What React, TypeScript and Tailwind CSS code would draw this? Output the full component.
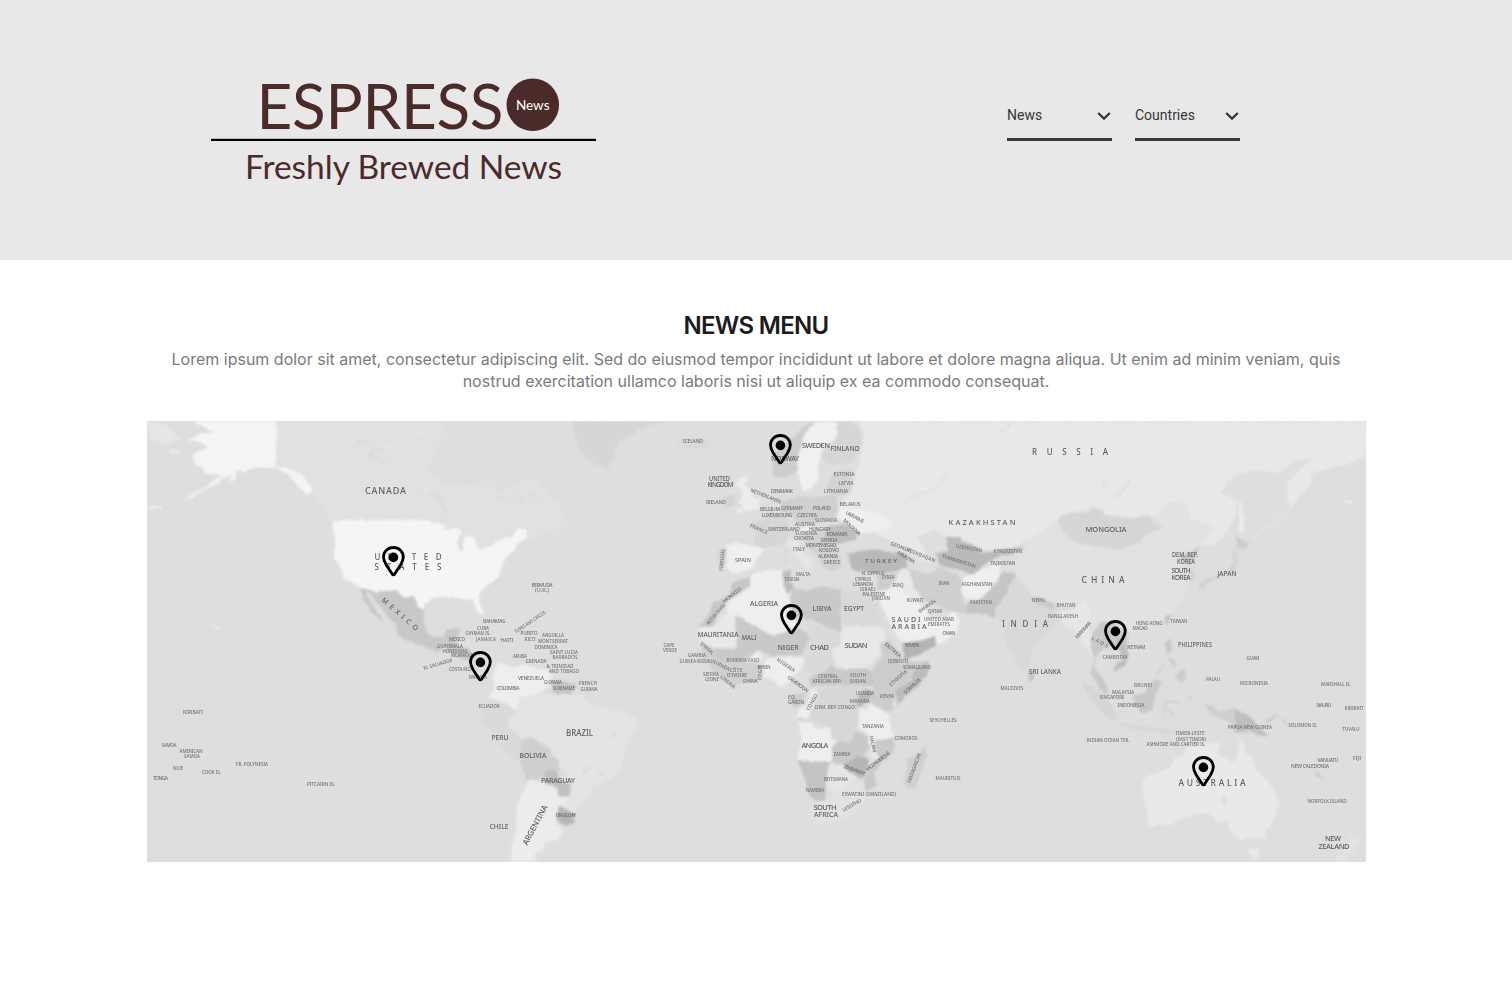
import React from "react";

type Shape = [fill: string, d: string];
type Label = [text: string, x: number, y: number, width: number, size: number, angle?: number];
type Pin = [name: string, x: number, y: number];

const land: Shape[] = [
  ["#e1e1e1", "276,421 440,421 450,440 432,455 430,472 442,482 470,486 480,478 500,492 520,480 535,478 548,492 562,510 570,525 545,533 527,540 518,528 502,538 478,551 470,540 447,526 427,520 332,521 322,505 310,490 294,470 276,467"],
  ["#dddddd", "440,440 480,430 492,450 480,478 470,484 445,480 434,465"],
  ["#e6e6e6", "147,422 165,424 180,438 168,445 150,440"],
  ["#f4f4f4", "189,421 276,421 276,467 286,468 301,474 312,487 312,493 305,493 296,484 288,474 276,468 254,467 244,472 236,470 236,478 229,483 232,475 222,478 218,474 206,474 202,468 194,463 192,456 197,452 209,447 196,441 187,440 197,435 212,432 201,425"],
  ["#f1f1f1", "228,474 218,484 204,490 190,498 180,502 193,494 206,487 216,478"],
  ["#f5f5f5", "332,521 338,523 340,520 427,520 447,526 440,531 458,528 462,532 457,541 460,552 463,548 464,537 474,536 476,545 480,550 492,546 502,538 512,537 518,528 525,528 528,537 517,544 515,550 506,556 502,565 500,573 497,579 486,586 479,594 479,602 484,613 478,614 473,600 457,598 447,597 434,598 424,604 424,610 418,607 414,597 405,598 394,590 377,592 359,587 344,578 341,568 334,557 335,540"],
  ["#c8c8c8", "359,587 377,592 394,590 405,598 414,597 418,607 424,610 424,626 430,636 443,638 447,629 460,628 458,637 448,645 439,652 427,648 408,641 397,634 396,624 387,616 378,604 368,591 366,594 373,606 384,621 381,621 371,611 364,601"],
  ["#c5c5c5", "442,646 450,640 458,640 456,645 470,650 474,661 466,660 455,656"],
  ["#d6d6d6", "573,421 667,421 655,424 647,427 634,432 627,438 619,441 614,456 607,469 596,464 586,458 578,447"],
  ["#d9d9d9", "676,440 684,437 690,441 700,437 708,439 706,446 694,449 682,447"],
  ["#ececec", "738,479 744,475 748,477 744,485 751,489 753,497 760,500 758,509 746,511 734,514 743,506 737,502 743,498 741,489 736,486"],
  ["#d2d2d2", "723,498 731,494 736,497 734,505 725,508"],
  ["#cdcdcd", "773,475 773,455 785,444 797,434 806,425 818,421 806,432 801,445 798,457 797,471 785,478"],
  ["#f0f0f0", "810,427 817,422 837,422 837,437 823,449 818,463 818,480 810,489 803,491 798,473 799,455 803,437"],
  ["#d6d6d6", "837,422 850,421 860,430 862,448 850,463 828,465 821,455 837,438"],
  ["#d3d3d3", "833,472 853,470 851,492 840,497 826,490"],
  ["#e8e8e8", "858,421 1366,421 1366,456 1350,463 1333,468 1322,470 1313,473 1310,485 1300,497 1290,509 1286,498 1287,484 1302,467 1313,457 1303,460 1293,462 1280,473 1262,471 1240,473 1228,482 1220,493 1237,500 1236,517 1223,538 1213,545 1202,545 1212,527 1192,520 1185,503 1167,502 1157,517 1140,517 1103,515 1093,508 1070,513 1057,520 1030,541 990,553 980,547 960,537 948,537 933,530 917,537 930,560 938,563 920,560 900,545 882,537 868,530 845,523 837,508 851,492 857,470 862,450 864,434"],
  ["#efefef", "838,508 858,510 874,512 893,521 890,530 876,531 868,533 858,533 845,523 838,518"],
  ["#d0d0d0", "783,501 800,496 815,498 835,494 838,508 835,517 820,522 801,523 788,515 780,511"],
  ["#d6d6d6", "748,524 764,520 771,511 787,517 790,530 786,543 765,548 753,544 757,532"],
  ["#efefef", "726,545 736,543 750,545 766,549 757,559 752,569 734,574 726,567"],
  ["#d0d0d0", "719,549 727,548 725,568 719,568"],
  ["#e6e6e6", "785,542 800,540 798,548 810,558 814,564 808,570 801,562 792,550"],
  ["#eeeeee", "795,528 810,526 812,531 799,533"],
  ["#d2d2d2", "802,533 822,530 838,545 842,567 827,572 816,555 806,545"],
  ["#bebebe", "827,527 846,524 858,533 855,540 842,543 823,541"],
  ["#b9b9b9", "847,554 860,551 877,549 890,553 906,554 907,568 890,572 873,573 852,570"],
  ["#cdcdcd", "877,575 896,572 897,580 884,592 878,590"],
  ["#e9e9e9", "897,573 905,568 912,576 922,594 917,600 893,588"],
  ["#efefef", "877,593 893,587 915,600 923,606 930,617 945,620 955,608 960,622 956,633 940,644 920,640 903,643 896,634 886,615"],
  ["#b4b4b4", "902,643 920,641 935,636 936,645 921,654 905,659"],
  ["#cfcfcf", "909,567 916,572 930,574 940,567 955,573 963,580 963,599 968,613 947,611 936,604 926,602 914,588"],
  ["#bababa", "947,537 960,537 963,542 973,545 983,553 1010,548 1024,547 1014,554 997,557 989,561 983,566 974,576 961,570 940,566 936,553 948,552"],
  ["#efefef", "963,578 980,570 1000,563 999,575 991,588 981,598 965,599 961,590"],
  ["#c5c5c5", "1002,572 1017,574 1014,580 1009,585 1007,595 996,607 995,618 981,613 967,614 966,604 981,599 992,588 1000,578"],
  ["#e2e2e2", "1030,541 1057,520 1063,526 1070,537 1100,547 1120,548 1140,540 1163,528 1157,517 1167,502 1185,503 1192,520 1212,527 1202,545 1180,555 1172,554 1183,572 1187,588 1183,601 1165,620 1135,632 1110,629 1085,622 1075,605 1050,603 1030,593 1017,577 1012,565 1022,551"],
  ["#d5d5d5", "1057,520 1063,515 1078,512 1090,513 1093,508 1103,510 1104,515 1130,519 1150,515 1152,523 1163,528 1145,534 1140,542 1120,549 1100,547 1077,543 1065,534"],
  ["#d9d9d9", "1013,577 1020,578 1033,597 1053,607 1075,608 1070,616 1057,622 1045,636 1032,647 1029,668 1022,674 1013,659 1006,642 1003,624 995,618 1000,603 1010,590"],
  ["#c9c9c9", "1030,598 1038,597 1055,604 1053,609 1040,606"],
  ["#e7e7e7", "1057,612 1075,609 1084,600 1090,612 1087,625 1096,640 1092,655 1084,646 1080,634 1065,625"],
  ["#c9c9c9", "1090,637 1100,623 1112,622 1127,633 1128,644 1120,649 1104,648 1097,655 1093,667 1106,682 1109,696 1100,690 1091,672 1095,658 1091,648"],
  ["#bfbfbf", "1115,636 1125,643 1129,655 1125,666 1113,672 1114,667 1123,659 1118,648"],
  ["#c4c4c4", "1028,670 1034,672 1034,680 1029,682"],
  ["#d5d5d5", "1081,682 1090,686 1102,696 1116,710 1117,720 1111,721 1098,708"],
  ["#d7d7d7", "1117,722 1140,726 1170,730 1188,732 1185,735 1150,732 1120,726"],
  ["#c8c8c8", "1133,695 1144,694 1155,679 1162,682 1155,695 1153,708 1145,714 1134,706"],
  ["#c8c8c8", "1165,640 1171,640 1172,651 1168,654 1165,647"],
  ["#cccccc", "1168,655 1176,662 1175,668 1168,660"],
  ["#cccccc", "1176,674 1185,668 1187,678 1181,682 1174,677"],
  ["#c4c4c4", "1167,615 1171,615 1168,625 1164,622"],
  ["#cfcfcf", "1202,704 1213,705 1218,712 1233,707 1247,714 1260,727 1246,733 1235,731 1229,722 1214,716"],
  ["#bfbfbf", "1235,711 1248,715 1257,724 1269,737 1257,735 1247,728 1243,733 1235,732"],
  ["#e9e9e9", "1143,780 1150,775 1170,768 1175,758 1183,756 1187,747 1197,746 1202,742 1220,743 1217,753 1230,762 1236,760 1240,738 1244,742 1246,753 1252,757 1256,770 1267,780 1275,790 1278,803 1275,818 1267,830 1265,840 1250,837 1238,840 1230,830 1227,820 1218,823 1211,813 1194,814 1180,819 1170,825 1158,825 1148,828 1148,812 1142,792"],
  ["#e9e9e9", "1247,848 1260,849 1258,857 1253,859"],
  ["#e3e3e3", "1346,826 1354,838 1363,838 1358,845 1344,861 1333,862 1341,853 1350,842"],
  ["#cccccc", "1237,537 1242,540 1250,543 1245,549 1236,548"],
  ["#d2d2d2", "1236,550 1238,562 1234,573 1220,577 1208,582 1201,592 1199,584 1210,577 1227,572 1233,562 1232,552"],
  ["#c5c5c5", "1200,547 1194,558 1190,564 1182,560 1178,555 1190,554"],
  ["#d2d2d2", "1188,567 1194,570 1194,580 1187,580"],
  ["#ebebeb", "1239,499 1243,506 1244,533 1239,532"],
  ["#c6c6c6", "733,582 750,577 750,587 738,594 727,600 718,612 713,627 698,627 709,614 713,603 730,595"],
  ["#eeeeee", "750,575 766,570 783,570 784,582 790,600 790,609 797,627 773,636 735,615 728,614 727,603 750,587"],
  ["#bebebe", "783,571 792,570 790,580 794,587 788,594 783,584"],
  ["#c9c9c9", "793,588 806,591 817,587 830,587 841,590 841,633 812,620 794,617 789,604"],
  ["#d9d9d9", "842,590 872,592 876,603 884,625 842,625"],
  ["#e9e9e9", "700,627 713,627 728,612 735,615 737,648 713,649 700,645"],
  ["#c9c9c9", "735,615 773,636 797,627 807,633 809,640 800,656 772,657 760,651 742,660 716,661 713,649 737,648"],
  ["#dadada", "808,622 841,633 840,645 832,650 835,665 811,678 801,660 809,641"],
  ["#e8e8e8", "842,626 883,627 886,640 879,655 868,667 850,670 835,665 832,650 840,645"],
  ["#d0d0d0", "700,645 712,647 718,659 742,660 755,655 763,680 747,681 733,687 718,677 704,660"],
  ["#ececec", "750,657 758,651 763,656 760,661 745,662"],
  ["#eeeeee", "765,660 775,656 803,657 805,661 797,673 787,683 780,688 771,678 763,677"],
  ["#c9c9c9", "808,678 822,673 832,665 836,670 866,668 880,677 876,686 845,685 812,686"],
  ["#cdcdcd", "880,643 889,640 900,655 908,662 927,662 900,689 893,700 893,712 882,711 870,702 875,684 871,671 882,657"],
  ["#bcbcbc", "916,668 929,661 929,670 920,684 907,695 897,706 897,690 910,681"],
  ["#d7d7d7", "817,690 845,685 869,688 862,697 858,709 857,726 852,732 855,743 832,741 830,727 814,723 797,719 806,710"],
  ["#b8b8b8", "863,690 873,690 872,697 861,706 856,708 858,698"],
  ["#cccccc", "789,695 806,693 803,704 793,708"],
  ["#eeeeee", "811,690 819,691 813,706 808,718 796,718 799,709 808,705"],
  ["#eeeeee", "798,722 813,723 816,730 830,727 832,739 837,741 836,748 832,748 832,762 797,760 802,739"],
  ["#c3c3c3", "797,760 830,763 827,773 825,802 816,801 808,793 805,778"],
  ["#c9c9c9", "832,747 838,741 850,743 855,730 868,736 869,749 862,757 848,766 832,762"],
  ["#e6e6e6", "828,765 843,765 858,778 849,784 837,792 827,790"],
  ["#b5b5b5", "843,765 858,756 868,759 868,768 861,778 850,773"],
  ["#eeeeee", "860,708 866,710 869,705 882,709 889,715 892,732 894,738 873,740 858,727"],
  ["#c9c9c9", "874,742 894,738 894,752 882,763 874,773 877,786 865,791 864,778 870,770 878,755"],
  ["#eeeeee", "869,737 873,740 873,752 879,758 875,761 871,754"],
  ["#e2e2e2", "810,808 827,800 837,792 850,784 860,780 867,792 866,800 852,816 836,823 818,825"],
  ["#d0d0d0", "925,745 927,756 921,773 915,789 906,788 904,780 908,767 907,759 917,755"],
  ["#eeeeee", "495,667 500,662 513,667 525,665 535,668 548,670 552,676 550,684 545,690 533,696 520,697 517,712 507,704 488,697 494,689 493,678"],
  ["#c4c4c4", "550,680 563,682 577,685 571,694 554,695"],
  ["#e4e4e4", "520,698 545,694 572,694 582,696 590,704 610,709 627,713 637,719 638,728 629,740 624,757 621,770 610,779 592,787 588,797 573,814 562,806 572,793 571,782 559,765 548,744 533,737 519,738 507,728 508,717 518,712"],
  ["#dadada", "480,707 492,700 506,704 517,712 508,720 509,728 519,736 523,751 523,765 505,752 495,738 483,722"],
  ["#cfcfcf", "521,740 532,736 540,744 550,749 551,757 559,759 559,773 549,770 543,777 526,781 521,762"],
  ["#c0c0c0", "544,774 550,769 557,772 561,781 571,785 569,796 558,796 558,788 545,783"],
  ["#ececec", "528,780 543,782 557,790 558,797 569,798 557,811 556,823 564,832 558,840 545,842 543,850 535,853 536,862 512,862 512,847 516,829 517,807 523,793"],
  ["#b7b7b7", "559,807 568,810 575,815 573,824 562,825 557,819"],
];

const strokes: Shape[] = [
  ["#d9d9d9", "M354 446 l12 -8 l10 9 l-8 7 l18 8 M420 492 l18 5 l10 17 M365 440 l20 12 M495 498 h10 M517 495 l6 6 M531 493 l8 5"],
  ["#e5e5e5", "M328 430 l22 12 l9 -8 l14 10 l20 3 l8 18 M390 445 l14 12 M410 430 l22 8 M415 470 l12 22 l-8 12"],
  ["#f0f0f0", "M148 509 l14 -2 M211 625 l9 4 M1345 502 l7 1 M170 451 l10 1"],
  ["#e4e4e4", "M1250 540 L1289 509"],
  ["#dedede", "M1000 432 l8 -6 l1 -5 M901 505 l12 -9 l18 -4 l18 -20 M1113 498 q12 -6 16 -18 M1103 480 l4 8"],
  ["#d2d2d2", "M1164 718 l1 -16 l13 0 M1166 708 l8 8 M1188 700 l6 -5 M1157 675 l8 -13"],
  ["#c6c6c6", "M1266 721 q8 0 9 -7 M1283 719 l4 6 M1315 772 l8 7"],
  ["#d6d6d6", "M612 737 l4 -4 M583 772 l8 -5 M598 773 l5 1 M1223 798 l3 6 M786 548 v16"],
];

const labels: Label[] = [
  ["CANADA", 385.5, 491, 41, 9],
  ["U N I T E D", 408, 557, 67, 8],
  ["S T A T E S", 408, 567, 67, 8],
  ["M E X I C O", 400, 614, 46, 7, 41],
  ["BRAZIL", 579.5, 733, 27, 9],
  ["PERU", 500, 737, 17, 7.5],
  ["BOLIVIA", 533, 755, 27, 7.5],
  ["PARAGUAY", 558, 780, 34, 7],
  ["CHILE", 499, 826, 19, 7.5],
  ["ARGENTINA", 535, 825, 44, 8, -62],
  ["URUGUAY", 566, 815, 20, 4.5],
  ["RUSSIA", 1070, 452, 76, 8],
  ["KAZAKHSTAN", 982, 522, 67, 7.5],
  ["MONGOLIA", 1106, 529, 41, 7.5],
  ["CHINA", 1103, 580, 43, 8.5],
  ["INDIA", 1025, 624, 46, 8],
  ["SWEDEN", 816, 445, 28, 7.5],
  ["FINLAND", 845, 448, 29, 7.5],
  ["NORWAY", 785, 458, 28, 7],
  ["UNITED", 719.5, 479, 21, 6.5],
  ["KINGDOM", 720.5, 485, 26, 6.5],
  ["ALGERIA", 764, 603, 28, 7.5],
  ["LIBYA", 822, 608.5, 19, 7.5],
  ["EGYPT", 854, 608.5, 20, 7.5],
  ["MAURITANIA", 718, 634, 41, 7.5],
  ["MALI", 749, 637, 15, 7],
  ["NIGER", 788, 647, 21, 7.5],
  ["CHAD", 819.5, 647.5, 19, 7.5],
  ["SUDAN", 856, 645, 23, 7.5],
  ["SAUDI", 906, 619, 29, 7],
  ["ARABIA", 909, 626.5, 35, 7],
  ["ANGOLA", 815, 745, 27, 7.5],
  ["SOUTH", 825, 807, 23, 7.5],
  ["AFRICA", 826, 814.5, 24, 7.5],
  ["AUSTRALIA", 1212, 783, 67, 8.5],
  ["NEW", 1333, 838, 16, 7.5],
  ["ZEALAND", 1334, 846, 31, 7.5],
  ["PHILIPPINES", 1195, 645, 34, 6.5],
  ["JAPAN", 1227, 574, 19, 6.5],
  ["DEM. REP.", 1185, 555, 26, 6.5],
  ["KOREA", 1186, 562, 18, 6.5],
  ["SOUTH", 1181, 571, 19, 6.5],
  ["KOREA", 1181, 577.5, 19, 6.5],
  ["SRI LANKA", 1045, 672, 32, 6.5],
  ["T U R K E Y", 881, 561, 32, 5.5],
];

const smallLabels: Label[] = [
  ["ICELAND", 693, 441, 20, 5],
  ["IRELAND", 716, 502, 20, 5],
  ["ESTONIA", 844, 474, 21, 5],
  ["LATVIA", 846, 483, 15, 5],
  ["LITHUANIA", 836, 491, 24, 5],
  ["DENMARK", 782, 491, 22, 5],
  ["NETHERLANDS", 766, 496, 33, 5, 22],
  ["BELARUS", 850, 504, 21, 5],
  ["BELGIUM", 770, 509, 20, 5],
  ["GERMANY", 792, 508, 22, 5],
  ["POLAND", 822, 508, 18, 5],
  ["LUXEMBOURG", 777, 515, 31, 5],
  ["CZECHIA", 807, 515, 20, 5],
  ["UKRAINE", 855, 517, 20, 5, 28],
  ["SLOVAKIA", 826, 520, 22, 5],
  ["AUSTRIA", 805, 524, 20, 5],
  ["MOLDOVA", 852, 527, 22, 5, 43],
  ["FRANCE", 759, 529, 19, 5, 22],
  ["SWITZERLAND", 784, 529, 32, 5],
  ["HUNGARY", 820, 529, 22, 5],
  ["SLOVENIA", 806, 533, 22, 5],
  ["ROMANIA", 837, 534, 21, 5],
  ["CROATIA", 804, 538, 20, 5],
  ["SERBIA", 829, 540, 17, 5],
  ["MONTENEGRO", 821, 545, 31, 5],
  ["KOSOVO", 829, 550, 20, 5],
  ["ITALY", 799, 549, 12, 5],
  ["ALBANIA", 828, 556, 20, 5],
  ["GREECE", 832, 562, 17, 5],
  ["SPAIN", 743, 560, 16, 5.5],
  ["PORTUGAL", 722, 560, 22, 5, -85],
  ["MALTA", 803, 574, 14, 5],
  ["TUNISIA", 792, 579, 15, 5],
  ["MOROCCO", 732, 595, 22, 5, -38],
  ["WESTERN SAHARA", 716, 614, 26, 5, -49],
  ["CAPE", 669, 645, 11, 4.5],
  ["VERDE", 670, 650.5, 14, 4.5],
  ["SENEGAL", 707, 648, 17, 5, 42],
  ["GAMBIA", 697, 655, 18, 4.5],
  ["GUINEA-BISSAU", 696, 661, 33, 4.5],
  ["GUINEA", 721, 665, 19, 5, 28],
  ["BURKINA FASO", 743, 660, 33, 4.5],
  ["CÔTE", 736, 670, 13, 4.5],
  ["D'IVOIRE", 737, 675, 20, 4.5],
  ["SIERRA", 711, 674, 16, 4.5],
  ["LEONE", 712, 679, 14, 4.5],
  ["LIBERIA", 728, 682, 18, 4.5, 40],
  ["BENIN", 764, 667, 13, 5],
  ["TOGO", 760, 673, 15, 5, -85],
  ["GHANA", 750, 681, 15, 4.5],
  ["NIGERIA", 786, 665, 21, 5, 35],
  ["CAMEROON", 798, 684, 25, 5, 37],
  ["EQ.", 792, 697, 8, 4.5],
  ["GABON", 796, 702, 16, 4.5],
  ["CONGO", 812, 702, 18, 5, -60],
  ["CENTRAL", 828, 676, 20, 4.5],
  ["AFRICAN REP.", 827, 681.5, 29, 4.5],
  ["SOUTH", 858, 675, 16, 4.5],
  ["SUDAN", 858, 681, 16, 4.5],
  ["ERITREA", 893, 650, 20, 5, 40],
  ["YEMEN", 912, 645, 15, 5],
  ["DJIBOUTI", 898, 661, 20, 4.5],
  ["SOMALILAND", 917, 667, 28, 4.5],
  ["ETHIOPIA", 898, 678, 22, 5, -41],
  ["SOMALIA", 912, 686, 21, 5, -43],
  ["UGANDA", 865, 693, 18, 4.5],
  ["RWANDA", 860, 701, 20, 4.5],
  ["KENYA", 887, 696, 14, 5],
  ["DEM. REP. CONGO", 835, 707, 40, 5],
  ["TANZANIA", 873, 726, 22, 5],
  ["ZAMBIA", 842, 754, 17, 5],
  ["MALAWI", 873, 744, 17, 4.5, 78],
  ["ZIMBABWE", 855, 770, 23, 5, 20],
  ["MOZAMBIQUE", 878, 761, 29, 5, -38],
  ["NAMIBIA", 815, 790, 18, 5],
  ["BOTSWANA", 836, 779, 24, 4.5],
  ["ESWATINI (SWAZILAND)", 869, 794, 54, 5],
  ["LESOTHO", 852, 805, 21, 5, -29],
  ["MADAGASCAR", 914, 768, 31, 5, -70],
  ["COMOROS", 906, 738, 23, 4.5],
  ["SEYCHELLES", 943, 720, 27, 4.5],
  ["MAURITIUS", 948, 778, 25, 5],
  ["GEORGIA", 901, 547, 22, 5, 20],
  ["AZERBAIJAN", 921, 555, 31, 5, 22],
  ["ARMENIA", 906, 557, 20, 5, 30],
  ["N. CYPRUS", 873, 573, 23, 4.5],
  ["SYRIA", 888, 577, 13, 4.5],
  ["CYPRUS", 863, 579, 16, 4.5],
  ["LEBANON", 863, 584, 20, 4.5],
  ["ISRAEL", 868, 589, 16, 4.5],
  ["PALESTINE", 874, 594, 23, 4.5],
  ["JORDAN", 881, 598.5, 18, 4.5],
  ["IRAQ", 898, 585, 11, 5],
  ["IRAN", 944, 583, 11, 5],
  ["KUWAIT", 915, 600, 17, 4.5],
  ["BAHRAIN", 927, 606, 20, 5, -35],
  ["QATAR", 935, 611, 14, 4.5],
  ["UNITED ARAB", 939, 619, 30, 4.5],
  ["EMIRATES", 939, 624, 22, 4.5],
  ["OMAN", 949, 633, 13, 4.5],
  ["UZBEKISTAN", 969, 548, 27, 5, 10],
  ["TURKMENISTAN", 959, 561, 35, 5, 18],
  ["KYRGYZSTAN", 1008, 551, 29, 4.5],
  ["TAJIKISTAN", 1003, 563, 25, 4.5],
  ["AFGHANISTAN", 977, 584, 31, 4.5],
  ["PAKISTAN", 981, 602, 22, 4.5],
  ["NEPAL", 1039, 600, 14, 4.5],
  ["BHUTAN", 1066, 605, 19, 4.5],
  ["BANGLADESH", 1063, 616, 30, 4.5],
  ["MYANMAR", 1083, 630, 21, 5, -47],
  ["LAOS", 1100, 642, 18, 5, 28],
  ["VIETNAM", 1136, 647, 19, 4.5],
  ["CAMBODIA", 1115, 657, 25, 4.5],
  ["MALDIVES", 1012, 688, 23, 4.5],
  ["HONG KONG", 1149, 623, 27, 4.5],
  ["MACAO", 1140, 628.5, 15, 4.5],
  ["TAIWAN", 1179, 621, 17, 5],
  ["BRUNEI", 1143, 685, 18, 4.5],
  ["MALAYSIA", 1123, 692, 22, 5],
  ["SINGAPORE", 1112, 697, 25, 5],
  ["INDONESIA", 1131, 705.5, 27, 5],
  ["PALAU", 1213, 679, 14, 4.5],
  ["GUAM", 1253, 658, 13, 4.5],
  ["MICRONESIA", 1254, 683, 28, 5],
  ["MARSHALL IS.", 1336, 684, 30, 5],
  ["NAURU", 1324, 705, 15, 5],
  ["KIRIBATI", 1354, 708, 19, 5],
  ["TUVALU", 1351, 729, 17, 5],
  ["SOLOMON IS.", 1303, 725, 29, 5],
  ["PAPUA NEW GUINEA", 1250, 727, 44, 5],
  ["INDIAN OCEAN TER.", 1108, 740, 43, 5],
  ["TIMOR-LESTE", 1190, 733.5, 29, 4.5],
  ["(EAST TIMOR)", 1191, 739, 30, 4.5],
  ["ASHMORE AND CARTIER IS.", 1176, 744, 59, 5],
  ["VANUATU", 1328, 760, 21, 5],
  ["FIJI", 1357, 758, 8, 5],
  ["NEW CALEDONIA", 1310, 766, 38, 5],
  ["NORFOLK ISLAND", 1327, 801, 39, 5],
  ["KIRIBATI", 193, 712.5, 20, 5],
  ["SAMOA", 169, 745, 15, 4.5],
  ["AMERICAN", 191, 751, 23, 4.5],
  ["SAMOA", 192, 756, 16, 4.5],
  ["NIUE", 178, 768.5, 10, 5],
  ["COOK IS.", 211.5, 772, 19, 5],
  ["TONGA", 160.5, 778, 15, 5],
  ["FR. POLYNESIA", 252, 764, 32, 5],
  ["PITCAIRN IS.", 321, 784, 28, 5],
  ["BERMUDA", 542, 585, 21, 5],
  ["(U.K.)", 542, 590.5, 14, 5],
  ["TURKS AND CAICOS", 530, 622, 36, 5, -34],
  ["BAHAMAS", 494, 621, 22, 5],
  ["CUBA", 483, 628.5, 12, 4.5],
  ["CAYMAN IS.", 478, 633.5, 25, 4.5],
  ["MEXICO", 457, 639, 16, 4.5],
  ["JAMAICA", 486, 639.5, 20, 4.5],
  ["HAITI", 507, 640, 13, 5],
  ["PUERTO", 529, 633.5, 17, 4.5],
  ["RICO", 530, 639, 11, 4.5],
  ["ANGUILLA", 553, 635.5, 22, 4.5],
  ["MONTSERRAT", 553, 641.5, 30, 4.5],
  ["DOMINICA", 546, 647, 23, 4.5],
  ["SAINT LUCIA", 564, 652, 28, 4.5],
  ["BARBADOS", 565, 657.5, 25, 4.5],
  ["ARUBA", 520, 656.5, 14, 4.5],
  ["GRENADA", 536, 661, 21, 4.5],
  ["& TRINIDAD", 560, 666, 27, 4.5],
  ["AND TOBAGO", 564, 671, 30, 4.5],
  ["GUATEMALA", 450, 646, 26, 4.5],
  ["HONDURAS", 455, 651, 25, 4.5],
  ["NICARAGUA", 462, 655, 22, 4.5],
  ["EL SALVADOR", 438, 664, 30, 5, -16],
  ["COSTA RICA", 461, 669.5, 24, 4.5],
  ["PANAMA", 478, 677, 18, 4.5],
  ["VENEZUELA", 531, 678, 26, 5],
  ["COLOMBIA", 508, 688.5, 23, 5],
  ["ECUADOR", 489, 706.5, 21, 4.5],
  ["GUYANA", 553, 682, 18, 4.5],
  ["SURINAME", 564, 688, 22, 4.5],
  ["FRENCH", 588, 683.5, 18, 4.5],
  ["GUIANA", 589, 689, 17, 4.5],
];

const pins: Pin[] = [
  ["United States", 382, 546],
  ["Panama", 469, 651],
  ["Norway", 769, 434],
  ["Niger", 780, 604],
  ["Thailand", 1104, 620],
  ["Australia", 1192, 756],
];

const MAP_X = 147;
const MAP_Y = 421;

function MapLabels({ items }: { items: Label[] }) {
  return (
    <>
      {items.map(([text, x, y, width, size, angle = 0], i) => (
        <text
          key={i}
          x={x - width / 2}
          y={y + size * 0.36}
          fontSize={size}
          textLength={width}
          lengthAdjust={width / text.length > size * 0.57 ? "spacing" : "spacingAndGlyphs"}
          transform={`rotate(${angle} ${x} ${y})`}
        >
          {text}
        </text>
      ))}
    </>
  );
}

function WorldMap() {
  return (
    <svg viewBox="147 421 1219 441" className="block h-[441px] w-[1219px] bg-[#dedede]" aria-label="World map">
      <defs>
        <filter id="coast" filterUnits="userSpaceOnUse" x="147" y="421" width="1219" height="441" colorInterpolationFilters="sRGB">
          <feTurbulence type="fractalNoise" baseFrequency="0.2" numOctaves="2" seed="4" result="noise" />
          <feDisplacementMap in="SourceGraphic" in2="noise" scale="3.5" xChannelSelector="R" yChannelSelector="G" />
          <feGaussianBlur stdDeviation="0.8" />
        </filter>
        <filter id="soft" filterUnits="userSpaceOnUse" x="147" y="421" width="1219" height="441">
          <feGaussianBlur stdDeviation="0.5" />
        </filter>
        <filter id="softer" filterUnits="userSpaceOnUse" x="147" y="421" width="1219" height="441">
          <feGaussianBlur stdDeviation="0.75 0.5" />
        </filter>
      </defs>
      <g filter="url(#coast)">
        <rect x="130" y="405" width="1255" height="475" fill="#dedede" />
        {land.map(([fill, points], i) => (
          <polygon key={i} points={points} fill={fill} />
        ))}
        {strokes.map(([color, d], i) => (
          <path key={i} d={d} fill="none" stroke={color} strokeWidth="1.8" />
        ))}
      </g>
      <g className="font-['Noto_Sans',sans-serif]" fontWeight="500">
        <g fill="#606060" filter="url(#soft)">
          <MapLabels items={labels} />
        </g>
        <g fill="#707070" filter="url(#softer)">
          <MapLabels items={smallLabels} />
        </g>
      </g>
    </svg>
  );
}

function MapPin({ name, x, y }: { name: string; x: number; y: number }) {
  return (
    <button aria-label={name} className="absolute h-[31px] w-[23px]" style={{ left: x - MAP_X, top: y - MAP_Y }}>
      <svg viewBox="0 0 23 31" className="block h-full w-full" fill="none">
        <path
          d="M11.4 1.5C5.8 1.5 1.5 5.7 1.5 11.1C1.5 14.2 2.7 16.6 4.4 19.2L10.2 28.1Q11.4 29.8 12.6 28.1L18.4 19.2C20.1 16.6 21.3 14.2 21.3 11.1C21.3 5.7 17 1.5 11.4 1.5Z"
          stroke="#000"
          strokeWidth="2.8"
          strokeLinejoin="round"
        />
        <circle cx="11.4" cy="11.4" r="4.8" fill="#000" />
      </svg>
    </button>
  );
}

function Logo() {
  return (
    <svg viewBox="211 60 385 140" className="h-[140px] w-[385px] overflow-visible font-['Lato',sans-serif]" fill="#4b2b2a" aria-label="Espresso News">
      <text x="256.5" y="129.3" fontSize="62" textLength="247">ESPRESS</text>
      <circle cx="532.8" cy="104.8" r="26.3" />
      <text x="516" y="110.3" fontSize="13.5" textLength="33.5" fill="#fff">News</text>
      <rect x="211" y="138.8" width="385" height="2.2" fill="#000" />
      <text x="245" y="179" fontSize="33.5" textLength="317">Freshly Brewed News</text>
    </svg>
  );
}

function Dropdown({ label }: { label: string }) {
  return (
    <button className="flex h-[37px] w-[105px] items-start justify-between border-b-[3px] border-[#333736] text-left">
      <span className="font-['Roboto',sans-serif] text-[14px] leading-[22px] text-[#333736]">{label}</span>
      <svg viewBox="0 0 14 8" className="mt-2 mr-px h-2 w-3.5" fill="none" stroke="#333736" strokeWidth="2.3">
        <path d="M1.2 1L7 6.6L12.8 1" />
      </svg>
    </button>
  );
}

export default function App() {
  return (
    <div className="min-h-[982px] bg-white font-['Inter',sans-serif]">
      <header className="flex h-[260px] items-start justify-between bg-[#e8e8e8] pr-[272px] pl-[211px]">
        <div className="pt-[60px]">
          <Logo />
        </div>
        <nav className="flex gap-[23px] pt-[104px]">
          <Dropdown label="News" />
          <Dropdown label="Countries" />
        </nav>
      </header>
      <main className="flex flex-col items-center pt-[50px]">
        <h1 className="text-[24px] leading-[32px] font-semibold tracking-[-0.7px] text-[#1c1c1c]">NEWS MENU</h1>
        <p className="mt-[6px] w-[1200px] text-center text-[16px] leading-[22px] text-[#7b7b7b]">
          Lorem ipsum dolor sit amet, consectetur adipiscing elit. Sed do eiusmod tempor incididunt ut labore et dolore magna aliqua. Ut enim ad minim veniam, quis
          <br />
          nostrud exercitation ullamco laboris nisi ut aliquip ex ea commodo consequat.
        </p>
        <section className="relative mt-[29px] ml-px w-[1219px]">
          <WorldMap />
          {pins.map(([name, x, y]) => (
            <MapPin key={name} name={name} x={x} y={y} />
          ))}
        </section>
      </main>
    </div>
  );
}
